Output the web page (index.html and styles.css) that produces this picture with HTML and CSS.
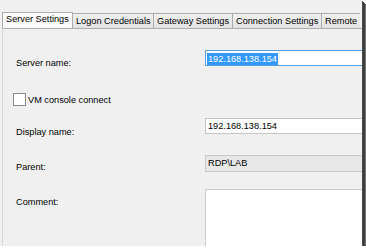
FILE: index.html
```html
<!DOCTYPE html>
<html lang="en">
<head>
    <meta charset="UTF-8">
    <title>Server Settings</title>
    <link rel="stylesheet" href="styles.css">
</head>
<body>
    <div class="window">
        <div class="tabs">
            <div class="tab tab-server active">Server Settings</div>
            <div class="tab tab-logon">Logon Credentials</div>
            <div class="tab tab-gateway">Gateway Settings</div>
            <div class="tab tab-connection">Connection Settings</div>
            <div class="tab tab-remote">Remote Desktop Settings</div>
        </div>

        <!-- Server Settings page -->
        <div class="panel">
            <div class="row row-server">
                <label>Server name:</label>
                <div class="field focused"><span class="selected">192.168.138.154</span></div>
            </div>

            <div class="row row-check">
                <span class="checkbox"></span>
                <span>VM console connect</span>
            </div>

            <div class="row row-display">
                <label>Display name:</label>
                <div class="field">192.168.138.154</div>
            </div>

            <div class="row row-parent">
                <label>Parent:</label>
                <div class="field combo">RDP\LAB</div>
            </div>

            <div class="row row-comment">
                <label>Comment:</label>
                <div class="field memo"></div>
            </div>
        </div>
    </div>
</body>
</html>
```

FILE: styles.css
```css
body {
    margin: 0;
    background: #fff;
    font-family: "Liberation Sans", Arial, sans-serif;
    font-size: 9.2px;
    color: #000;
}
.window {
    width: 362px;
    height: 246px;
    background: #f0f0f0;
    overflow: hidden;
    box-shadow: 1px 1px 0 #4e4e4e, 2px 2px 0 #363636, 3px 3px 0 #474747, 4px 4px 0 #707070;
}
.tabs {
    display: flex;
    align-items: flex-end;
    width: 358px;
    height: 28px;
    padding-left: 2px;
    overflow: hidden;
    position: relative;
    z-index: 1;
}
.tab {
    flex: none;
    box-sizing: border-box;
    height: 15px;
    line-height: 14px;
    padding-left: 3px;
    white-space: nowrap;
    background: linear-gradient(#f0f0f0, #e3e3e3);
    border-top: 1px solid #acacac;
    border-left: 1px solid #acacac;
}
.tab.active {
    height: 17px;
    line-height: 12px;
    margin-bottom: -1px;
    background: #fbfbfb;
    border-right: 1px solid #acacac;
}
.tab-server { width: 71px; }
.tab-logon { width: 80px; border-left: none; }
.tab-gateway { width: 79px; }
.tab-connection { width: 89px; }
.tab-remote { width: 60px; }
.panel {
    width: 420px;
    height: 230px;
    margin-left: 2px;
    padding: 21px 0 0 13px;
    border-top: 1px solid #acacac;
    border-left: 1px solid #d4d4d4;
}
.row {
    display: flex;
    align-items: flex-start;
}
.row label {
    flex: none;
    width: 189px;
    line-height: 11px;
}
.field {
    flex: none;
    box-sizing: border-box;
    width: 200px;
    height: 16px;
    padding: 0 2px;
    line-height: 14px;
    background: #fff;
    border: 1px solid #c4c4c4;
}
.field.focused {
    padding: 1px 1px;
    border-color: #569de5;
}
.selected {
    display: inline-block;
    line-height: 12px;
    padding: 0 1px;
    background: #3399ff;
    color: #fff;
}
.row-server label { padding-top: 8px; }
.row-check {
    align-items: center;
    margin-top: 24px;
    margin-left: -3px;
}
.checkbox {
    box-sizing: border-box;
    width: 13px;
    height: 13px;
    margin-right: 2px;
    background: #fff;
    border: 1px solid #8a8a8a;
}
.row-display { margin-top: 12px; }
.row-display label { padding-top: 9px; }
.row-parent { margin-top: 17px; }
.row-parent label { padding-top: 7px; }
.combo {
    height: 17px;
    line-height: 15px;
    background: #e8e8e8;
    border-color: #c9c9c9;
}
.row-comment { margin-top: 16px; }
.row-comment label { padding-top: 8px; }
.memo {
    height: 80px;
    border-color: #c9c9c9;
}
```
